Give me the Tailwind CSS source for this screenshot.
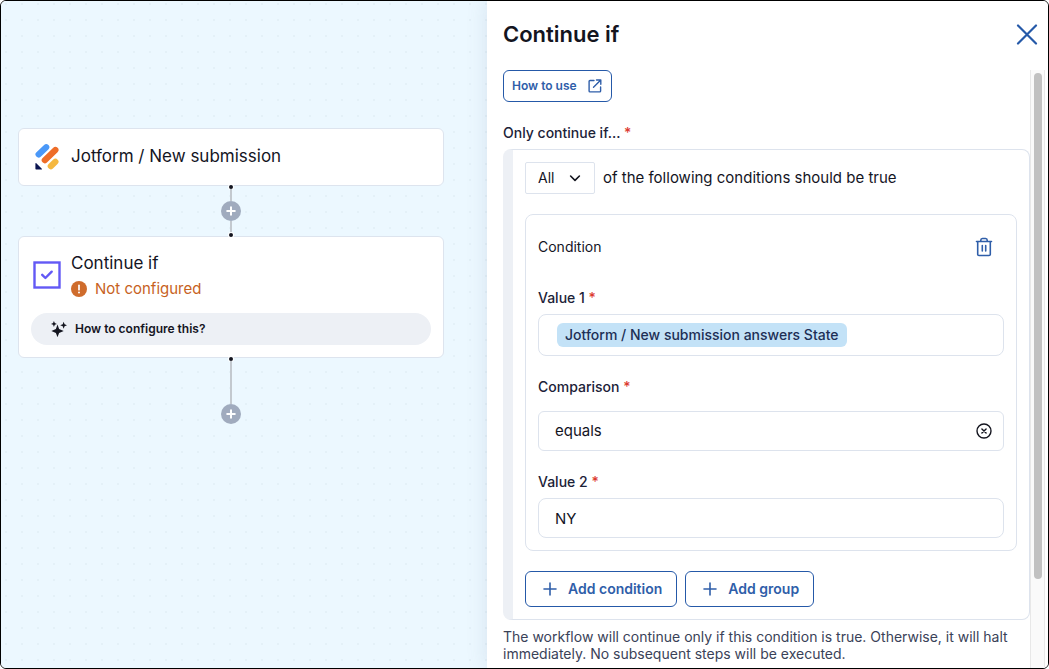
<!DOCTYPE html>
<html lang="en">
    <head>
        <meta charset="UTF-8" />
        <meta name="viewport" content="width=device-width, initial-scale=1.0" />
        <title>Workflow builder</title>
        <script src="https://cdn.jsdelivr.net/npm/@tailwindcss/browser@4"></script>
    </head>
    <body class="bg-white font-['Inter',sans-serif] text-[#14151f] antialiased">
        <div class="flex h-screen overflow-hidden rounded-md border border-black">
            <!-- canvas -->
            <main
                class="min-w-0 flex-1 bg-[#ecf8ff] bg-[radial-gradient(circle_at_5px_3px,#e4f1f8_1px,transparent_1px)] bg-[length:16px_16px] pt-[127px] pr-[43px] pl-[17px]">
                <section class="flex h-[58px] items-center rounded-md border border-[#dde4ee] bg-white pl-4">
                    <svg class="h-7 w-6" viewBox="0 0 24 28" fill="none" stroke-linecap="round" aria-hidden="true">
                        <path d="M3.6 11.4 11.2 4.2" stroke="#4a98f8" stroke-width="6.2" />
                        <path d="M9.8 17.2 20.4 7" stroke="#ee6d28" stroke-width="6.2" />
                        <path d="M15.800 23.200 20.400 18.800" stroke="#f5b840" stroke-width="6.2" />
                        <path d="M.4 20.600v5c0 .6.4 1 1 1h5c.6 0 .8-.5.4-.9l-5.500-5.500c-.4-.4-.9-.1-.9.4z" fill="#0b1551" />
                    </svg>
                    <h2 class="ml-3 text-[17px]">Jotform / New submission</h2>
                </section>

                <div class="relative -my-px flex h-[52px] flex-col items-center">
                    <span class="size-1 rounded-full bg-[#14151f] ring-1 ring-white"></span>
                    <span class="w-0.5 flex-1 bg-[#c3c9cf]"></span>
                    <button class="flex size-5 items-center justify-center rounded-full bg-[#a0abbe]" aria-label="Add step">
                        <svg class="size-5" viewBox="0 0 20 20" fill="none" stroke="#fff" stroke-width="2" stroke-linecap="round">
                            <path d="M10 6.2v7.6M6.2 10h7.6" />
                        </svg>
                    </button>
                    <span class="w-0.5 flex-1 bg-[#c3c9cf]"></span>
                    <span class="size-1 rounded-full bg-[#14151f] ring-1 ring-white"></span>
                </div>

                <section class="rounded-md border border-[#dde4ee] bg-white px-3 pt-3 pb-3">
                    <div class="flex items-center pl-0.5">
                        <svg class="size-7" viewBox="0 0 28 28" fill="none" stroke="#6359f5" stroke-width="2.4" aria-hidden="true">
                            <rect x="1.5" y="1.5" width="25" height="25" />
                            <path d="m9.2 13.800 3.200 3.200 6.300-6.300" stroke-linecap="round" stroke-linejoin="round" />
                        </svg>
                        <div class="ml-2.5">
                            <h2 class="text-[17px] leading-7">Continue if</h2>
                            <p class="flex items-center text-[15px] leading-6 text-[#c7621e]">
                                <svg class="mr-2 size-4" viewBox="0 0 16 16" aria-hidden="true">
                                    <circle cx="8" cy="8" r="8" fill="#cf6c2c" />
                                    <path d="M8 4.3v4.4" stroke="#fff" stroke-width="1.7" stroke-linecap="round" />
                                    <circle cx="8" cy="11.5" r="1" fill="#fff" />
                                </svg>
                                Not configured
                            </p>
                        </div>
                    </div>
                    <button class="mt-3 flex h-8 w-full items-center rounded-full bg-[#edf0f5] pl-5 text-xs font-semibold">
                        <svg class="mr-2 size-4" viewBox="0 0 16 16" fill="currentColor" aria-hidden="true">
                            <path d="M6.500 3.400 8.100 8l4.600 2-4.600 1.900-1.600 4.300-1.600-4.300L.4 10l4.500-2z" />
                            <path d="m2.900 0 .9 2.100 2.100.8-2.100.9-.9 2.100-.8-2.100L0 2.900l2.100-.8z" />
                            <path d="m12.600.8 1 2.500 2.400.9-2.400 1-1 2.500-.9-2.500-2.500-1 2.500-.9z" />
                        </svg>
                        How to configure this?
                    </button>
                </section>

                <div class="relative -mt-px flex flex-col items-center">
                    <span class="size-1 rounded-full bg-[#14151f] ring-1 ring-white"></span>
                    <span class="h-[43px] w-0.5 bg-[#c3c9cf]"></span>
                    <button class="flex size-5 items-center justify-center rounded-full bg-[#a0abbe]" aria-label="Add step">
                        <svg class="size-5" viewBox="0 0 20 20" fill="none" stroke="#fff" stroke-width="2" stroke-linecap="round">
                            <path d="M10 6.2v7.6M6.2 10h7.6" />
                        </svg>
                    </button>
                </div>
            </main>

            <!-- step settings -->
            <aside class="relative flex w-[561px] flex-col bg-white shadow-[0_0_20px_rgba(80,100,140,0.14)]">
                <header class="mb-0.5 flex h-[67px] shrink-0 items-center justify-between pr-2.5 pl-4">
                    <h1 class="text-[22px] font-semibold">Continue if</h1>
                    <button class="text-[#2559a8]" aria-label="Close">
                        <svg class="size-[22px]" viewBox="0 0 22 22" fill="none" stroke="currentColor" stroke-width="2.2" stroke-linecap="round">
                            <path d="m2 1.500 18 18M20 1.500l-18 18" />
                        </svg>
                    </button>
                </header>

                <div class="flex min-h-0 flex-1">
                    <form class="min-w-0 flex-1 overflow-hidden pl-4">
                        <a href="#" class="inline-flex h-8 items-center rounded-md border border-[#2559a8] px-2 text-xs font-semibold text-[#2f5ea9]">
                            How to use
                            <svg class="ml-2.5 size-4" viewBox="0 0 16 16" fill="none" stroke="currentColor" stroke-width="1.4" stroke-linecap="round" stroke-linejoin="round" aria-hidden="true">
                                <path d="M7 2.5H3a.9.9 0 0 0-.9.9V13c0 .5.4.9.9.9h9.700c.5 0 .9-.4.9-.9V9M9.500 2h4.300v4.300M13.500 2.300 6.500 9.300" />
                            </svg>
                        </a>

                        <h2 class="mt-[21px] mb-1.5 text-sm leading-5 font-medium text-[#1c2238]">Only continue if... <span class="text-[#dc3a30]">*</span></h2>

                        <div class="rounded-lg border border-l-10 border-[#dde3ed] border-l-[#edf0f5] p-3">
                            <div class="flex items-center">
                                <div class="relative">
                                    <select class="h-8 w-[70px] appearance-none rounded-xs border border-[#dde3ed] pl-3 text-sm" aria-label="Match">
                                        <option>All</option>
                                        <option>Any</option>
                                    </select>
                                    <svg class="pointer-events-none absolute top-2 right-3 size-4" viewBox="0 0 16 16" fill="none" stroke="currentColor" stroke-width="1.6" stroke-linecap="round" stroke-linejoin="round" aria-hidden="true">
                                        <path d="m3.600 6 4.400 4.400L12.400 6" />
                                    </svg>
                                </div>
                                <span class="ml-2 text-[15px]">of the following conditions should be true</span>
                            </div>

                            <fieldset class="mt-5 rounded-lg border border-[#dde3ed] p-3">
                                <div class="flex h-10 items-center justify-between pr-[11px]">
                                    <h3 class="text-sm">Condition</h3>
                                    <button type="button" class="text-[#2f5ea9]" aria-label="Delete condition">
                                        <svg class="h-5 w-[18px]" viewBox="0 0 18 20" fill="none" stroke="currentColor" stroke-width="1.6" stroke-linecap="round" stroke-linejoin="round">
                                            <path d="M1.500 4.500h15M2.700 4.500v12.700c0 .8.5 1.300 1.300 1.300h10c.8 0 1.300-.5 1.300-1.300V4.500M5.800 4.300V3.200c0-1 .6-1.700 1.600-1.700h3.200c1 0 1.600.7 1.600 1.700v1.100M7.300 8.500v5.500M10.700 8.500v5.500" />
                                        </svg>
                                    </button>
                                </div>

                                <label for="value1" class="mt-[21px] mb-1.5 block text-sm leading-5 font-medium text-[#1c2238]">Value 1 <span class="text-[#dc3a30]">*</span></label>
                                <div class="flex h-[42px] items-center rounded-lg border border-[#dde3ed] pl-[18px]">
                                    <span class="rounded-md bg-[#c3e2f7] px-2 text-sm leading-6 font-medium text-[#1d2f55]">Jotform / New submission answers State</span>
                                    <input id="value1" type="text" class="min-w-0 flex-1 outline-none" />
                                </div>

                                <label for="comparison" class="mt-[21px] mb-3.5 block text-sm leading-5 font-medium text-[#1c2238]">Comparison <span class="text-[#dc3a30]">*</span></label>
                                <div class="flex h-10 items-center rounded-md border border-[#dde3ed] pr-[11px] pl-4">
                                    <select id="comparison" class="min-w-0 flex-1 appearance-none text-[15px] outline-none">
                                        <option>equals</option>
                                        <option>does not equal</option>
                                    </select>
                                    <button type="button" aria-label="Clear comparison">
                                        <svg class="size-4" viewBox="0 0 16 16" fill="none" stroke="currentColor" stroke-width="1.4" stroke-linecap="round">
                                            <circle cx="8" cy="8" r="7" />
                                            <path d="m5.900 5.900 4.200 4.200M10.100 5.900l-4.200 4.200" />
                                        </svg>
                                    </button>
                                </div>

                                <label for="value2" class="mt-[21px] mb-1.5 block text-sm leading-5 font-medium text-[#1c2238]">Value 2 <span class="text-[#dc3a30]">*</span></label>
                                <input id="value2" type="text" value="NY" class="block h-10 w-full rounded-lg border border-[#dde3ed] px-4 text-[15px] outline-none" />
                            </fieldset>

                            <div class="mt-5 flex gap-2">
                                <button type="button" class="flex h-9 items-center rounded-md border border-[#2559a8] px-3.5 text-sm font-semibold text-[#2f5ea9]">
                                    <svg class="mr-2.5 ml-0.5 size-4" viewBox="0 0 16 16" stroke="currentColor" stroke-width="1.6" stroke-linecap="round" aria-hidden="true"><path d="M8 2v12M2 8h12" /></svg>
                                    Add condition
                                </button>
                                <button type="button" class="flex h-9 items-center rounded-md border border-[#2559a8] px-3.5 text-sm font-semibold text-[#2f5ea9]">
                                    <svg class="mr-2.5 ml-0.5 size-4" viewBox="0 0 16 16" stroke="currentColor" stroke-width="1.6" stroke-linecap="round" aria-hidden="true"><path d="M8 2v12M2 8h12" /></svg>
                                    Add group
                                </button>
                            </div>
                        </div>

                        <p class="mt-2 text-sm leading-[17px] text-[#3a4258]">
                            The workflow will continue only if this condition is true. Otherwise, it will halt immediately. No subsequent steps will be executed.
                        </p>
                    </form>

                    <div class="mr-[3px] w-[15px] shrink-0 border-x border-[#e8e8e8] bg-[#fafafa] px-[3px] pt-[3px]">
                        <div class="h-[85%] w-2 rounded-full bg-[#c1c1c1]"></div>
                    </div>
                </div>
            </aside>
        </div>
    </body>
</html>
